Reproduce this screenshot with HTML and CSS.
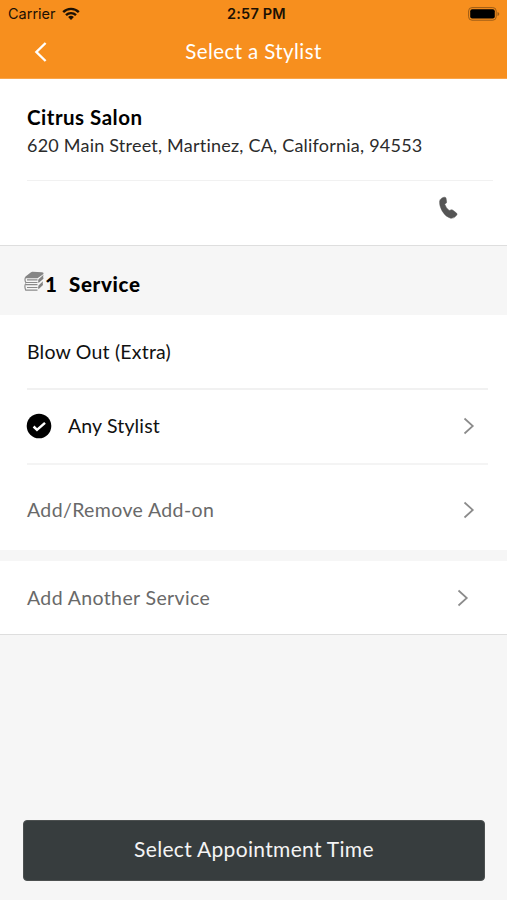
FILE: index.html
```html
<!DOCTYPE html>
<html lang="en">
<head>
<meta charset="utf-8">
<title>Select a Stylist</title>
<link rel="stylesheet" href="styles.css">
</head>
<body>
<header class="header">
  <div class="status">
    <div class="carrier"><span class="carrier-name">Carrier</span>
      <svg width="18" height="14" viewBox="0 0 18 14"><g fill="none" stroke="#1c1104" stroke-width="2.4"><path d="M1.2 5.1a11 11 0 0 1 15.6 0"/><path d="M4 8.2a7.1 7.1 0 0 1 10 0"/></g><path d="M9 13l-2.9-2.9a4.2 4.2 0 0 1 5.8 0z" fill="#1c1104"/></svg>
    </div>
    <time class="clock">2:57 PM</time>
    <svg class="battery" width="32" height="14" viewBox="0 0 32 14"><rect x=".6" y=".6" width="27.6" height="12.6" rx="3.4" fill="none" stroke="#9c5c16" stroke-width="1"/><rect x="2.2" y="2.2" width="24.6" height="9.4" rx="2" fill="#000"/><path d="M29.5 5v4q1.8-.6 1.8-2t-1.8-2z" fill="#9c5c16"/></svg>
  </div>
  <nav class="nav">
    <svg class="back" width="14" height="22" viewBox="0 0 14 22"><path d="M11.6 2L2.4 11l9.2 9" fill="none" stroke="#fff" stroke-width="2.4"/></svg>
    <h1 class="title">Select a Stylist</h1>
  </nav>
</header>
<main>
  <section class="salon">
    <div class="salon-info">
      <h2 class="salon-name">Citrus Salon</h2>
      <p class="address">620 Main Street, Martinez, CA, California, 94553</p>
    </div>
    <div class="contact">
      <svg width="19" height="24" viewBox="0 0 19 24"><path d="M2.4 2.4Q4 1.2 5.600 1.200q1.300 0 1.500 1.300l.5 3.400q.1 1.200-1 1.600L5.700 8.200q1.300 3.800 4.500 6.300l1.700-.6q1.100-.5 2 .3l3.600 2.900q1 .9.300 2-2.500 3.700-6.100 3.200-5.100-1.300-8.400-7Q.200 9.700.6 5.200.9 3.400 2.400 2.400z" fill="#555" stroke="#555" stroke-width=".5"/></svg>
    </div>
  </section>
  <div class="section-head">
    <svg width="21" height="21" viewBox="0 0 21 21"><g fill="#858585"><path d="M1.500 5.500L7 1.200q.6-.5 1.500-.4l9.500.4q2 .1 1.500 1.800L13.500 7.200H2Q1 6.500 1.500 5.500z"/><path d="M14.500 8.200l5-4.500q-.7 1.800 0 4L14.500 12q-.8-2 0-3.800zM14.500 14.500L19 10.300q-.6 1.500 0 3.700l-4.500 4.300q-.8-1.800 0-3.800z"/></g><g fill="none" stroke="#8b8b8b" stroke-width="1.200"><path d="M1.800 6.200Q.2 8.500 1.800 11.500h11.700M3 8.900h10.500M1.800 12.500Q0 15 1.800 19.200h11.700M3 16.500h10.500M2 13.600h11.500"/></g></svg>
    <span class="count">1</span><h2 class="section-title">Service</h2>
  </div>
  <section class="services">
    <div class="row service"><span class="label blow">Blow Out (Extra)</span></div>
    <div class="row stylist">
      <svg class="check" width="26" height="26" viewBox="0 0 26 26"><circle cx="13" cy="13" r="12.300"/><path d="M7.600 13.500l3.400 3.400 8-7" fill="none" stroke="#fff" stroke-width="2.500"/></svg>
      <span class="label any">Any Stylist</span>
      <svg class="chevron" width="12" height="18" viewBox="0 0 12 18"><path d="M1.500 1.500l8.300 7.500-8.300 7.500"/></svg>
    </div>
    <div class="row addon"><span class="label addon-label">Add/Remove Add-on</span>
      <svg class="chevron" width="12" height="18" viewBox="0 0 12 18"><path d="M1.500 1.500l8.300 7.500-8.300 7.500"/></svg>
    </div>
  </section>
  <section class="another"><span class="label another-label">Add Another Service</span>
    <svg class="chevron" width="12" height="18" viewBox="0 0 12 18"><path d="M1.500 1.500l8.300 7.500-8.300 7.500"/></svg>
  </section>
</main>
<footer class="footer"><button class="submit" type="button">Select Appointment Time</button></footer>
</body>
</html>
```

FILE: styles.css
```css
* { box-sizing: border-box; }
body {
  margin: 0;
  height: 900px;
  display: flex;
  flex-direction: column;
  background: #f6f6f6;
  color: #111;
  font: 19.5px/26px Lato, sans-serif;
  font-variant-ligatures: none;
}
h1, h2, p { margin: 0; font-size: inherit; white-space: nowrap; }
svg { display: block; flex: none; }
.header { height: 79px; background: #f78f1e; border-bottom: 1px solid #f9a54a; }
.status {
  height: 27px;
  padding: 0 7px 0 8px;
  display: grid;
  grid-template-columns: 1fr auto 1fr;
  align-items: center;
  font: 14.5px/27px Inter, sans-serif;
  color: #1c1104;
}
.carrier { display: flex; align-items: center; gap: 6px; }
.clock { font-weight: 600; letter-spacing: 0.2px; padding-left: 5px; }
.battery { justify-self: end; }
.nav { height: 51px; display: grid; grid-template-columns: 60px 1fr 60px; align-items: center; }
.back { margin: -2px 0 0 34px; }
.title { margin-top: -4px; text-align: center; color: #fff; font-size: 20.5px; font-weight: 400; letter-spacing: 0.4px; }
.salon { height: 167px; background: #fff; border-bottom: 1px solid #dedede; }
.salon-info { height: 102px; margin: 0 14px 0 27px; padding-top: 25px; border-bottom: 1px solid #f1f1f1; }
.salon-name { font-size: 20.5px; font-weight: 700; letter-spacing: 0.5px; color: #000; }
.address { font-size: 18px; line-height: 30px; letter-spacing: 0.22px; color: #2b2b2b; }
.contact { padding: 15px 49px 0 0; display: flex; justify-content: flex-end; }
.section-head { height: 69px; padding: 6px 24px 0; display: flex; align-items: center; color: #000; }
.section-head svg { margin-top: -4px; }
.count { font-size: 20.5px; font-weight: 900; width: 24px; }
.section-title { font-size: 20.5px; font-weight: 900; letter-spacing: 0.65px; }
.services { height: 235px; padding: 0 19px 0 27px; background: #fff; }
.row { display: flex; align-items: center; }
.service { height: 75px; border-bottom: 2px solid #f1f1f1; }
.stylist { height: 75px; padding-bottom: 2px; border-bottom: 2px solid #f4f4f4; }
.addon { height: 85px; padding-top: 4px; }
.blow { letter-spacing: 0.2px; }
.check { margin-left: -1px; }
.any { margin-left: 16px; letter-spacing: 0.15px; }
.chevron { margin-left: auto; margin-right: 13px; fill: none; stroke: #8b8b8b; stroke-width: 1.7; }
.another { height: 74px; margin-top: 11px; padding: 0 25px 0 27px; display: flex; align-items: center; background: #fff; border-bottom: 1px solid #dedede; }
.addon-label, .another-label { color: #696969; letter-spacing: 0.38px; }
.footer { margin-top: auto; padding: 0 22px 19px 23px; }
.submit {
  display: block;
  width: 100%;
  height: 61px;
  padding: 0 0 3px;
  border: 1px solid #4c5050;
  border-radius: 4px;
  background: #373d3e;
  color: #f4f4f4;
  font: 21px/26px Lato, sans-serif;
  letter-spacing: 0.32px;
}
```
